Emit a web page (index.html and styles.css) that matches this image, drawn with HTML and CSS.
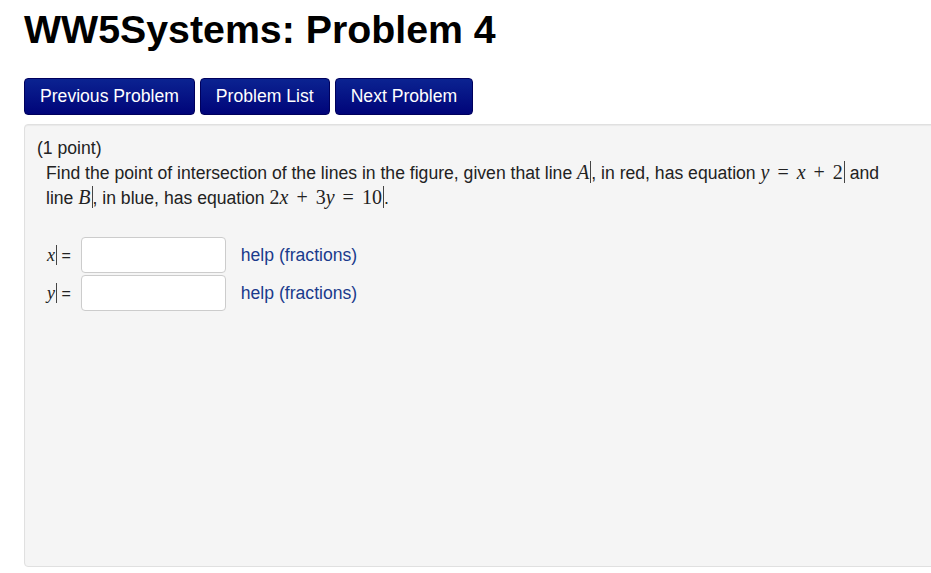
FILE: index.html
```html
<!DOCTYPE html>
<html lang="en">
  <head>
    <meta charset="UTF-8" />
    <meta name="viewport" content="width=device-width, initial-scale=1.0" />
    <title>WW5Systems: Problem 4</title>
    <link rel="stylesheet" href="styles.css">
  </head>
  <body>
    <div class="page">
      <h1>WW5Systems: Problem 4</h1>

      <nav class="problem-nav">
        <a href="#" class="btn">Previous Problem</a>
        <a href="#" class="btn">Problem List</a>
        <a href="#" class="btn">Next Problem</a>
      </nav>

      <section class="problem well">
        <div class="points">(1 point)</div>
        <div class="problem-text">
          Find the point of intersection of the lines in the figure, given that line
          <span class="math">A</span>, in red, has equation
          <span class="math">y <span class="op">=</span> x <span class="op">+</span> <span class="num">2</span></span> and
          line <span class="math">B</span>, in blue, has equation
          <span class="math"><span class="num">2</span>x <span class="op">+</span> <span class="num">3</span>y <span class="op">=</span> <span class="num">10</span></span>.
        </div>

        <div class="answers">
          <div class="answer-row">
            <label for="ans-x"><span class="math">x</span> =</label>
            <input type="text" id="ans-x" class="answer" />
            <a href="#" class="help">help (fractions)</a>
          </div>
          <div class="answer-row">
            <label for="ans-y"><span class="math">y</span> =</label>
            <input type="text" id="ans-y" class="answer" />
            <a href="#" class="help">help (fractions)</a>
          </div>
        </div>
      </section>
    </div>
  </body>
</html>
```

FILE: styles.css
```css
* {
  margin: 0;
  padding: 0;
  box-sizing: border-box;
}

html,
body {
  overflow: hidden;
}

body {
  font-family: "Liberation Sans", Arial, sans-serif;
  font-size: 17.6px;
  color: #222;
  background-color: #fff;
}

.page {
  padding-left: 24px;
  width: 960px;
}

h1 {
  font-size: 39.3px;
  line-height: 44px;
  font-weight: bold;
  color: #000;
  margin-top: 7px;
}

.problem-nav {
  display: flex;
  gap: 5px;
  margin-top: 27px;
}

.btn {
  display: block;
  height: 37px;
  line-height: 35px;
  padding: 0 15px;
  font-size: 17.6px;
  color: #fff;
  text-decoration: none;
  border: 1px solid #00005c;
  border-radius: 4px;
  background: linear-gradient(to bottom, #0b2391, #000479);
}

.well {
  margin-top: 9px;
  width: 920px;
  height: 443px;
  padding: 11px 12px;
  background-color: #f5f5f5;
  border: 1px solid #e0e0e0;
  border-radius: 4px;
  box-shadow: inset 0 1px 1px rgba(0, 0, 0, 0.05);
  line-height: 25px;
}

.problem-text {
  padding-left: 9px;
  width: 860px;
}

.math {
  font-family: "Liberation Serif", "Times New Roman", serif;
  font-style: italic;
  font-size: 20px;
  line-height: 1;
  border-right: 1px solid #444;
  padding-right: 1px;
}

.math .op,
.math .num {
  font-style: normal;
}

.math .op {
  margin: 0 3px;
}

.answers {
  display: flex;
  flex-direction: column;
  gap: 2px;
  margin-top: 26px;
  padding-left: 10px;
}

.answer-row {
  display: flex;
  align-items: center;
}

.answer-row label {
  font-size: 16px;
  margin-right: 10px;
}

.answer-row .math {
  font-size: 18px;
}

.answer {
  width: 145px;
  height: 36px;
  border: 1px solid #ccc;
  border-radius: 4px;
  background-color: #fff;
  margin-right: 15px;
}

.help {
  color: #1a3a8c;
  text-decoration: none;
}
```
